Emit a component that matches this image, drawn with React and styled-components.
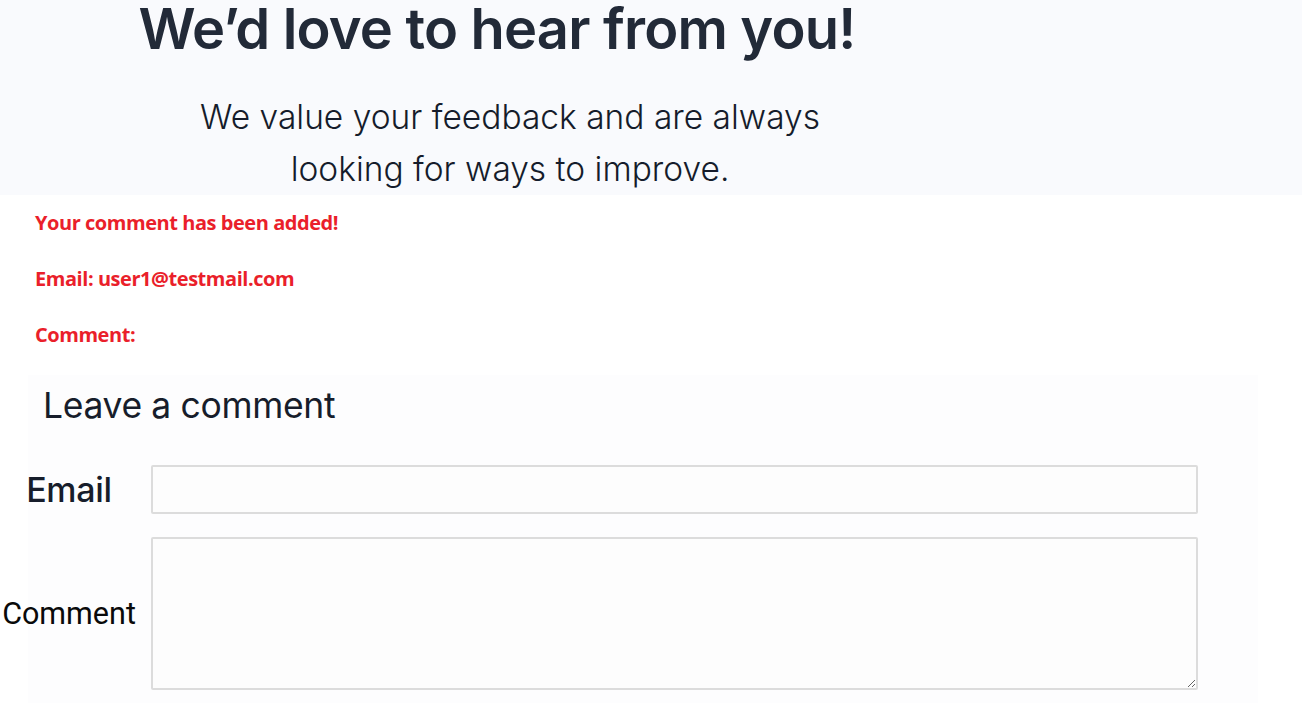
import React from 'react'
import styled, { createGlobalStyle } from 'styled-components'

const GlobalStyle = createGlobalStyle`
  html, body {
    margin: 0;
    padding: 0;
    background: #ffffff;
  }
  body {
    font-family: Inter, "Liberation Sans", sans-serif;
  }
`

const Page = styled.div`
  width: 1302px;
  min-height: 703px;
  overflow: hidden;
`

const Hero = styled.section`
  background: #f9fafd;
  height: 195px;
  width: 1302px;
  box-sizing: border-box;
  padding-right: 308px;
  text-align: center;
  overflow: hidden;
`

const Title = styled.h1`
  margin: 0;
  font-family: Inter, sans-serif;
  font-size: 56px;
  font-weight: 600;
  line-height: 58px;
  color: #222a38;
  letter-spacing: -0.8px;
`

const Lead = styled.p`
  margin: 33px 0 0 26px;
  font-family: Inter, sans-serif;
  font-size: 33.5px;
  font-weight: 300;
  line-height: 52px;
  color: #151c2b;
`

const Notice = styled.div`
  display: flex;
  flex-direction: column;
  gap: 33px;
  padding: 16px 0 0 35px;
`

const NoticeLine = styled.div`
  font-family: "Open Sans", Lato, sans-serif;
  font-size: 20px;
  font-weight: 700;
  line-height: 23px;
  color: #ea1f2b;
  letter-spacing: -0.45px;
`

const FormPanel = styled.section`
  margin: 29px 44px 0 28px;
  background: #fdfdfe;
  padding-bottom: 14px;
`

const FormTitle = styled.h2`
  margin: 0;
  padding: 9px 0 0 15px;
  font-family: Inter, sans-serif;
  font-size: 35.5px;
  font-weight: 400;
  line-height: 44px;
  color: #171d2b;
  letter-spacing: -0.35px;
`

const Field = styled.div`
  display: flex;
  align-items: center;
  margin-left: -28px;
  margin-top: ${p => p.$top}px;
`

const Label = styled.label`
  width: 138px;
  flex: none;
  text-align: center;
  font-family: ${p => (p.$plain ? 'Roboto, "Liberation Sans", sans-serif' : 'Inter, sans-serif')};
  font-size: ${p => (p.$plain ? 30.5 : 34)}px;
  font-weight: ${p => (p.$plain ? 400 : 500)};
  color: ${p => (p.$plain ? '#0a0a0a' : '#171d2b')};
  letter-spacing: ${p => (p.$plain ? '0px' : '-0.3px')};
`

const Input = styled.input`
  margin-left: 13px;
  width: 1047px;
  height: 49px;
  box-sizing: border-box;
  border: 2px solid #dcdcdc;
  border-radius: 2px;
  background: #fdfdfd;
  outline: none;
`

const TextArea = styled.textarea`
  margin-left: 13px;
  width: 1047px;
  height: 153px;
  box-sizing: border-box;
  border: 2px solid #dcdcdc;
  border-radius: 2px;
  background: #fdfdfd;
  outline: none;
  resize: vertical;
  font-family: Inter, sans-serif;
`

export default function App() {
  return (
    <Page>
      <GlobalStyle />
      <Hero>
        <Title>We’d love to hear from you!</Title>
        <Lead>
          We value your feedback and are always
          <br />
          looking for ways to improve.
        </Lead>
      </Hero>
      <Notice>
        <NoticeLine>Your comment has been added!</NoticeLine>
        <NoticeLine>Email: user1@testmail.com</NoticeLine>
        <NoticeLine>Comment:</NoticeLine>
      </Notice>
      <FormPanel>
        <FormTitle>Leave a comment</FormTitle>
        <Field $top={37}>
          <Label htmlFor="email">Email</Label>
          <Input id="email" type="email" />
        </Field>
        <Field $top={23}>
          <Label htmlFor="comment" $plain>Comment</Label>
          <TextArea id="comment" />
        </Field>
      </FormPanel>
    </Page>
  )
}
